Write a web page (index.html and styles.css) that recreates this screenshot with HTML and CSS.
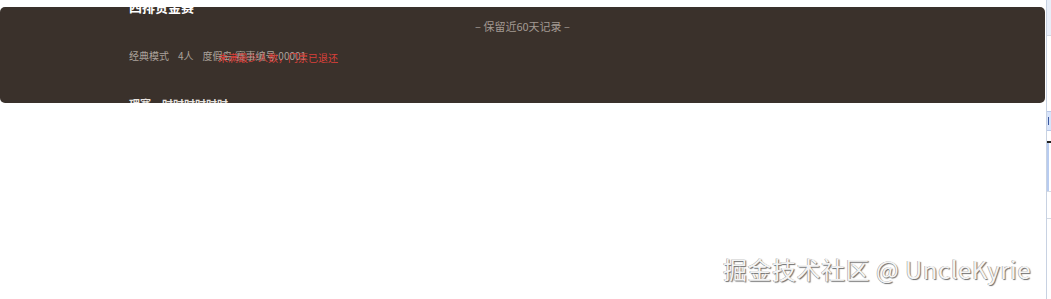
FILE: index.html
```html
<!DOCTYPE html>
<html lang="zh">
<head>
<meta charset="utf-8">
<link rel="stylesheet" href="styles.css">
</head>
<body>
<div class="page">
  <div class="panel">
    <div class="notice">– 保留近60天记录 –</div>
    <div class="content">
      <div class="title-row">
        <span class="title">四排贵金赛</span>
        <span class="tag">赛事结束</span>
      </div>
      <div class="meta">
        <span>经典模式</span>
        <span>4人</span>
        <span>度假岛</span>
        <span>赛事编号:00001</span>
        <span class="refund">未满最少人数，门票已退还</span>
      </div>
      <div class="next">理赛　时时时时时时</div>
    </div>
  </div>
  <div class="strip">
    <div class="s-top"></div>
    <div class="s-line"></div>
    <div class="s-gap1"></div>
    <div class="s-box"><i></i></div>
    <div class="s-dash"></div>
    <div class="s-blue"></div>
    <div class="s-line"></div>
    <div class="s-gap2"></div>
    <div class="s-line"></div>
  </div>
</div>
<div class="watermark">掘金技术社区 @ UncleKyrie</div>
</body>
</html>
```
FILE: styles.css
```css
html, body {
  margin: 0;
  padding: 0;
  background: #ffffff;
  width: 1051px;
  height: 299px;
  overflow: hidden;
  font-family: "Noto Sans CJK SC", "Noto Sans", sans-serif;
}
.page {
  display: flex;
  align-items: flex-start;
  height: 299px;
}
.panel {
  position: relative;
  margin-top: 7px;
  width: 1045px;
  height: 96px;
  background: #3a312b;
  border-radius: 5px;
  overflow: hidden;
  flex-shrink: 0;
}
.notice {
  position: absolute;
  left: 0;
  right: 0;
  top: 11px;
  text-align: center;
  font-size: 11px;
  line-height: 16px;
  color: #a39a93;
}
.content {
  display: flex;
  flex-direction: column;
  padding-left: 129px;
  margin-top: -9px;
}
.title-row {
  display: flex;
  align-items: flex-start;
  gap: 10px;
  height: 18px;
}
.title {
  font-size: 13px;
  font-weight: 700;
  line-height: 18px;
  color: #ffffff;
}
.tag {
  font-size: 9px;
  line-height: 12px;
  color: #2f9a3c;
  margin-top: -4px;
}
.meta {
  position: relative;
  display: flex;
  gap: 9px;
  margin-top: 32px;
  font-size: 10px;
  line-height: 16px;
  color: #aaa29b;
}
.meta span:nth-child(4) {
  margin-left: -6px;
}
.refund {
  position: absolute;
  left: 89px;
  top: 2px;
  color: #d9403a;
  font-size: 10px;
  white-space: nowrap;
}
.next {
  margin-top: 32px;
  font-size: 11px;
  font-weight: 700;
  line-height: 16px;
  color: #e8e4e0;
}
.strip {
  margin-left: 1px;
  width: 5px;
  height: 299px;
  border-left: 1px solid #c8d2e2;
  display: flex;
  flex-direction: column;
}
.s-top {
  height: 35px;
  background: #e8eef8;
}
.s-line {
  height: 1px;
  background: #d4dae4;
}
.s-gap1 {
  height: 75px;
}
.s-box {
  height: 18px;
  background: #d8e4fa;
  border-top: 1px solid #b8c8e8;
  border-bottom: 1px solid #b8c8e8;
  display: flex;
  align-items: center;
}
.s-box i {
  display: block;
  width: 1px;
  height: 8px;
  margin-left: 1px;
  background: #3a58a0;
}
.s-dash {
  height: 2px;
  margin-top: 10px;
  background: #222222;
}
.s-blue {
  height: 48px;
  border-left: 2px solid #b8ccf0;
}
.s-gap2 {
  height: 26px;
}
.watermark {
  position: absolute;
  left: 723px;
  top: 252px;
  font-family: "Noto Sans CJK SC", "Noto Sans", sans-serif;
  font-size: 24px;
  line-height: 34px;
  letter-spacing: 0.5px;
  color: #f4f4f4;
  text-shadow: 1px 1px 1px #6d6d6d, -0.5px -0.5px 0 #9a9a9a;
  white-space: nowrap;
}
```
